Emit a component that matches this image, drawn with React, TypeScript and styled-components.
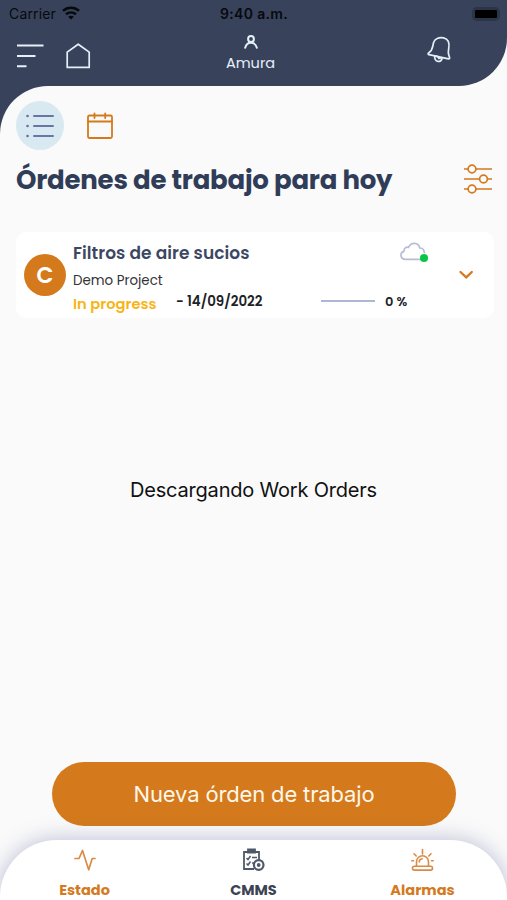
import React from 'react';
import styled, { createGlobalStyle } from 'styled-components';

const navy = '#38435b';
const orange = '#d47a1d';
const paper = '#fafafa';
const brandFont = 'Poppins, Inter, "Open Sans", sans-serif';

const GlobalStyle = createGlobalStyle`
  * { box-sizing: border-box; }
  body { margin: 0; background: ${paper}; font-family: Inter, sans-serif; }
  button { border: 0; padding: 0; background: none; font: inherit; color: inherit; }
  svg { display: block; flex: none; overflow: visible; }
`;

const Screen = styled.div`
  display: flex;
  flex-direction: column;
  width: 507px;
  height: 900px;
  overflow: hidden;
  background: linear-gradient(to right, ${navy} 50%, ${paper} 50%);
`;

const Header = styled.header`
  height: 86px;
  flex: none;
  background: ${navy};
  border-radius: 0 0 48px 0;
`;

const StatusBar = styled.div`
  display: grid;
  grid-template-columns: 1fr auto 1fr;
  align-items: center;
  height: 28px;
  padding: 0 8px 0 9px;
  color: #07090d;
  font-size: 14.5px;
  line-height: 18px;
`;

const Carrier = styled.div`
  display: flex;
  align-items: center;
  gap: 6px;
  font-size: 14px;
  letter-spacing: 0.15px;
`;

const Clock = styled.div`
  font-weight: 600;
  font-size: 14px;
  letter-spacing: 0.35px;
`;

const Battery = styled.div`
  justify-self: end;
  width: 28px;
  height: 14px;
  padding: 3px;
  margin-right: -1px;
  border-radius: 5px;
  background: #2c3548;
  &::before {
    content: '';
    display: block;
    height: 8px;
    border-radius: 1px;
    background: #000;
  }
`;

const Toolbar = styled.div`
  display: grid;
  grid-template-columns: 1fr auto 1fr;
  height: 58px;
  padding: 0 55px 0 17px;
  color: #e6effa;
`;

const ToolGroup = styled.div`
  display: flex;
  gap: 23px;
  padding-top: 15px;
`;

const Account = styled.div`
  display: flex;
  flex-direction: column;
  align-items: center;
  gap: 4px;
  padding-top: 7px;
  width: 60px;
  margin-left: 16px;
  margin-right: -16px;
  font-family: ${brandFont};
  font-size: 14.5px;
  line-height: 20px;
`;

const BellSlot = styled.div`
  display: flex;
  justify-content: flex-end;
  padding-top: 9px;
`;

const Content = styled.main`
  display: flex;
  flex-direction: column;
  flex: 1;
  min-height: 0;
  padding-top: 15px;
  background: ${paper};
  border-radius: 48px 0 0 0;
`;

const ViewTabs = styled.div`
  display: flex;
  align-items: center;
  gap: 23px;
  padding-left: 16px;
`;

const ListTab = styled.button`
  display: grid;
  place-items: center;
  width: 48px;
  height: 49px;
  border-radius: 50%;
  background: #d9e9f1;
`;

const TitleRow = styled.div`
  display: flex;
  align-items: center;
  justify-content: space-between;
  height: 34px;
  margin-top: 12px;
  padding: 0 15px 0 16px;
`;

const Title = styled.h1`
  margin: 0;
  padding-top: 2px;
  color: #303d58;
  font-family: ${brandFont};
  font-size: 26px;
  font-weight: 700;
  line-height: 34px;
  letter-spacing: -0.23px;
  white-space: nowrap;
`;

const OrderCard = styled.article`
  display: grid;
  grid-template-columns: 42px 1fr 16px;
  column-gap: 7px;
  align-items: center;
  height: 86px;
  margin: 36px 13px 0 16px;
  padding: 0 20px 0 8px;
  border-radius: 10px;
  background: #fff;
`;

const Avatar = styled.div`
  display: grid;
  place-items: center;
  width: 42px;
  height: 42px;
  border-radius: 50%;
  background: ${orange};
  color: #fff;
  font-family: ${brandFont};
  font-size: 22px;
  font-weight: 600;
`;

const OrderBody = styled.div`
  align-self: start;
  font-family: ${brandFont};
  white-space: nowrap;
`;

const OrderHead = styled.div`
  display: flex;
  justify-content: space-between;
  height: 37px;
  padding: 10px 23px 0 0;
`;

const OrderTitle = styled.h2`
  margin: 0;
  color: #3b4763;
  font-size: 17px;
  font-weight: 600;
  line-height: 22px;
  letter-spacing: 0.05px;
`;

const CloudBadge = styled.div`
  position: relative;
  width: 28px;
  height: 22px;
`;

const OnlineDot = styled.span`
  position: absolute;
  right: 0;
  top: 12px;
  width: 8px;
  height: 8px;
  border-radius: 50%;
  background: #06c745;
`;

const Project = styled.div`
  height: 24px;
  color: #333;
  font-size: 13.4px;
  line-height: 23px;
`;

const OrderMeta = styled.div`
  display: grid;
  grid-template-columns: 103px 145px 54px auto;
  align-items: start;
  color: #202227;
  font-size: 13.4px;
  font-weight: 600;
  line-height: 17px;
`;

const Status = styled.span`
  padding-top: 3px;
  color: #f8b414;
  font-size: 14.7px;
`;

const ProgressLine = styled.span`
  height: 2px;
  margin-top: 7px;
  background: #aeb8d4;
`;

const Percent = styled.span`
  padding-left: 10px;
  font-size: 13px;
`;

const Message = styled.p`
  margin: 159px 0 0;
  color: #111;
  font-size: 20px;
  letter-spacing: -0.2px;
  line-height: 26px;
  text-align: center;
`;

const NewOrder = styled.button`
  width: 404px;
  height: 64px;
  margin: auto 0 14px 52px;
  flex: none;
  border-radius: 32px;
  background: ${orange};
  color: #fff7ea;
  font-size: 22px;
  letter-spacing: -0.15px;
`;

const NavSurface = styled.div`
  flex: none;
  background: ${paper};
`;

const BottomNav = styled.nav`
  display: grid;
  grid-template-columns: repeat(3, 1fr);
  height: 60px;
  padding-top: 8px;
  border-radius: 57px 57px 0 0;
  background: #fff;
  box-shadow: 0 0 22px rgba(73, 80, 145, 0.36);
`;

const NavItem = styled.button<{ $active?: boolean }>`
  display: flex;
  flex-direction: column;
  align-items: center;
  gap: 8px;
  color: ${({ $active }) => ($active ? '#3b4354' : orange)};
  font-family: ${brandFont};
  font-size: 14.5px;
  font-weight: 700;
  line-height: 20px;
`;

const WifiIcon = () => (
  <svg width="18" height="14" viewBox="0 0 18 14" fill="none" stroke="currentColor" strokeWidth="2.5">
    <path d="M1 3.8C5.500-.4 12.500-.4 17 3.800M4 7.300c2.900-2.500 7.100-2.500 10 0" />
    <path d="m9 12.500-2.900-2.800c1.600-1.400 4.200-1.400 5.800 0z" fill="currentColor" stroke="none" />
  </svg>
);

const MenuIcon = () => (
  <svg width="26" height="26" viewBox="0 0 26 26" stroke="currentColor" strokeWidth="2.1">
    <path d="M0 2.500h26.500M0 13h18.500M0 23.200h9.500" />
  </svg>
);

const HomeIcon = () => (
  <svg width="24" height="26" viewBox="0 0 24 26" fill="none" stroke="currentColor" strokeWidth="1.700" strokeLinejoin="round">
    <path d="M1.200 9.100 12.200 1.200l11 7.900v15.300h-22z" />
  </svg>
);

const PersonIcon = () => (
  <svg width="14" height="14" viewBox="0 0 14 14" fill="none" stroke="currentColor" strokeWidth="2" strokeLinecap="round">
    <circle cx="7" cy="4" r="2.900" />
    <path d="M1.200 12.800c.8-3.300 3-5 5.800-5s5 1.700 5.800 5" />
  </svg>
);

const BellIcon = () => (
  <svg width="25" height="27" viewBox="0 0 25 27" fill="none" stroke="currentColor" strokeWidth="1.700" strokeLinejoin="round">
    <path d="M10.200 1.500C14-.2 19.500.7 21.300 4.400c2.100 4.300-.8 8.900.2 12.700l1.100 3.600c.2.800-.4 1.300-1.200 1.100L2 17.700c-.9-.2-1.100-1.200-.4-1.700 4.800-3.200 3.600-6.300 5.100-10.800.6-1.800 1.800-3 3.500-3.700Z" />
    <path d="M7.800 19c-.5 2.700.8 5 3.200 5.400 2 .4 3.900-1.100 4.200-3.200M8.300 19.200c2-.5 3 .2 3.600 2.200 1.200-.7 2.300-.8 3.200-.1" />
  </svg>
);

const ListIcon = () => (
  <svg width="28" height="24" viewBox="0 0 28 24" stroke="#6776a4" strokeWidth="2" strokeLinecap="round">
    <path d="M8 2h19M8 12h19M8 22h19" />
    <path d="M1.500 2h.1M1.500 12h.1M1.500 22h.1" strokeWidth="2.600" />
  </svg>
);

const CalendarIcon = () => (
  <svg width="26" height="27" viewBox="0 0 26 27" fill="none" stroke={orange} strokeWidth="1.800" strokeLinejoin="round">
    <rect x="1" y="3.500" width="24" height="22.500" rx="1.500" />
    <path d="M1 9.500h24M7.500 1.500v4.500M18.200 1.500v4.500" strokeLinecap="round" />
  </svg>
);

const FilterIcon = () => (
  <svg width="28" height="30" viewBox="0 0 28 30" fill={paper} stroke={orange} strokeWidth="1.700">
    <path d="M0 5h28M0 15h28M0 25h28" />
    <circle cx="8" cy="5" r="3.900" />
    <circle cx="19.500" cy="15" r="3.900" />
    <circle cx="8" cy="25" r="3.900" />
  </svg>
);

const CloudIcon = () => (
  <svg width="28" height="20" viewBox="0 0 28 20" fill="none" stroke="#b7bed4" strokeWidth="1.700" strokeLinejoin="round">
    <path d="M5 17.300h19M5 17.300C-.3 16.700-.1 10.200 4 9.300c-.2-3 2.300-4.800 4.500-3.800C10.700-.3 18.700-.1 19.700 6c3.200-.2 4.700 2.400 4.700 5.200" />
  </svg>
);

const ChevronIcon = () => (
  <svg width="16" height="10" viewBox="0 0 16 10" fill="none" stroke={orange} strokeWidth="2.300" strokeLinecap="round">
    <path d="m2.500 2 5.700 5.300L13.800 2" />
  </svg>
);

const PulseIcon = () => (
  <svg width="22" height="24" viewBox="0 0 22 24" fill="none" stroke="#d98b45" strokeWidth="1.700" strokeLinejoin="round" strokeLinecap="round">
    <path d="M1 10.500h4L8.500 2.500l6.200 19.300 3.500-11.300H21" />
  </svg>
);

const WorkOrderIcon = () => (
  <svg width="23" height="24" viewBox="0 0 23 24" fill="none" stroke="#50596a" strokeWidth="1.800">
    <path d="M12 21H2V4h15v8" />
    <path d="M6 1.500h7v3H6z" fill="#50596a" />
    <path d="m4.500 10 1.500 1.500L8.500 8M4.500 15.500 6 17l2.500-3.500M10 9.500h5M10 15h2" strokeWidth="1.500" />
    <circle cx="16.700" cy="17" r="4.800" fill="#fff" strokeWidth="2.200" />
    <circle cx="16.700" cy="17" r="1" />
  </svg>
);

const AlarmIcon = () => (
  <svg width="23" height="24" viewBox="0 0 23 24" fill="none" stroke="#d98b45" strokeWidth="1.600" strokeLinecap="round" strokeLinejoin="round">
    <rect x="1.500" y="18.300" width="20" height="3.800" rx="1.800" />
    <path d="M5.500 18.300v-4.500a6 6 0 0 1 12 0v4.500M8.200 14c0-1.800 1.200-3 3-3.200M11.500 1.500v4.500M3 5.800l2.200 2.200M20 5.800l-2.200 2.200M.8 12.800h1.700M20.500 12.800h1.700" />
  </svg>
);

export default function App() {
  return (
    <Screen>
      <GlobalStyle />
      <Header>
        <StatusBar>
          <Carrier>Carrier <WifiIcon /></Carrier>
          <Clock>9:40 a.m.</Clock>
          <Battery />
        </StatusBar>
        <Toolbar>
          <ToolGroup><MenuIcon /><HomeIcon /></ToolGroup>
          <Account><PersonIcon />Amura</Account>
          <BellSlot><BellIcon /></BellSlot>
        </Toolbar>
      </Header>
      <Content>
        <ViewTabs>
          <ListTab aria-label="Lista"><ListIcon /></ListTab>
          <CalendarIcon />
        </ViewTabs>
        <TitleRow>
          <Title>Órdenes de trabajo para hoy</Title>
          <FilterIcon />
        </TitleRow>
        <OrderCard>
          <Avatar>C</Avatar>
          <OrderBody>
            <OrderHead>
              <OrderTitle>Filtros de aire sucios</OrderTitle>
              <CloudBadge><CloudIcon /><OnlineDot /></CloudBadge>
            </OrderHead>
            <Project>Demo Project</Project>
            <OrderMeta>
              <Status>In progress</Status>
              <span>- 14/09/2022</span>
              <ProgressLine />
              <Percent>0 %</Percent>
            </OrderMeta>
          </OrderBody>
          <ChevronIcon />
        </OrderCard>
        <Message>Descargando Work Orders</Message>
        <NewOrder>Nueva órden de trabajo</NewOrder>
      </Content>
      <NavSurface>
        <BottomNav>
          <NavItem><PulseIcon />Estado</NavItem>
          <NavItem $active><WorkOrderIcon />CMMS</NavItem>
          <NavItem><AlarmIcon />Alarmas</NavItem>
        </BottomNav>
      </NavSurface>
    </Screen>
  );
}
